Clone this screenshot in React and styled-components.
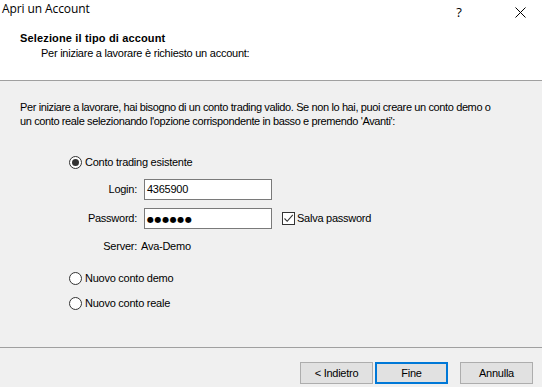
import React from 'react'
import styled, { createGlobalStyle } from 'styled-components'

const Global = createGlobalStyle`
  html, body { margin: 0; padding: 0; background: #f0f0f0; }
  * { box-sizing: border-box; }
`

const Window = styled.div`
  width: 542px;
  height: 387px;
  display: flex;
  flex-direction: column;
  background: #f0f0f0;
  color: #000;
  font-family: "Liberation Sans", Arial, sans-serif;
  font-size: 11px;
  letter-spacing: -0.25px;
  overflow: hidden;
`

const TitleBar = styled.div`
  height: 28px;
  display: flex;
  align-items: flex-start;
  background: #fff;
  padding: 1px 0 0 2px;
`

const Caption = styled.div`
  flex: 1;
  font-family: "Open Sans", "Noto Sans", sans-serif;
  font-size: 12px;
  line-height: 16px;
  letter-spacing: -0.1px;
`

const CaptionButton = styled.div`
  width: ${({ $w }) => $w}px;
  margin-left: ${({ $ml }) => $ml || 0}px;
  height: 22px;
  display: flex;
  align-items: center;
  justify-content: center;
  font-family: "Open Sans", "Noto Sans", sans-serif;
  font-size: 13px;
`

const Header = styled.div`
  height: 53px;
  background: #fff;
  border-bottom: 1px solid #a0a0a0;
  padding: 4px 0 0 20px;
`

const HeaderTitle = styled.div`
  font-weight: bold;
  line-height: 13px;
  letter-spacing: 0.15px;
`

const HeaderSub = styled.div`
  line-height: 13px;
  margin: 2px 0 0 21px;
`

const Content = styled.div`
  height: 266px;
  padding: 19px 20px 0 20px;
  display: flex;
  flex-direction: column;
`

const Intro = styled.p`
  margin: 0;
  line-height: 14px;
  white-space: nowrap;
  letter-spacing: -0.38px;
`

const OptionRow = styled.label`
  display: flex;
  align-items: center;
  gap: 3px;
  height: 16px;
  margin: ${({ $mt }) => $mt}px 0 0 49px;
  line-height: 13px;
`

const RadioCircle = styled.span`
  width: 13px;
  height: 13px;
  border-radius: 50%;
  border: 1px solid #333;
  background: #fff;
  display: flex;
  align-items: center;
  justify-content: center;
  &::after {
    content: '';
    width: 7px;
    height: 7px;
    border-radius: 50%;
    background: ${({ $on }) => ($on ? '#333' : 'transparent')};
  }
`

const Form = styled.div`
  display: grid;
  grid-template-columns: 117px 128px auto;
  column-gap: 7px;
  row-gap: 8px;
  margin-top: 9px;
  align-items: center;
`

const Label = styled.div`
  text-align: right;
  line-height: 13px;
  margin-top: ${({ $mt }) => $mt || 0}px;
`

const TextBox = styled.div`
  height: 21px;
  border: 1px solid #7a7a7a;
  background: #fff;
  padding: 0 2px;
  display: flex;
  align-items: center;
  line-height: 13px;
`

const Dots = styled.span`
  font-family: "DejaVu Sans", sans-serif;
  font-size: 8px;
  letter-spacing: 0.6px;
  margin-top: 1px;
`

const CheckRow = styled.label`
  display: flex;
  align-items: center;
  gap: 2px;
  margin-left: 3px;
  line-height: 13px;
`

const CheckBox = styled.span`
  width: 13px;
  height: 13px;
  border: 1px solid #333;
  background: #fff;
  display: flex;
  align-items: center;
  justify-content: center;
`

const ServerValue = styled.div`
  margin: 3px 0 0 -3px;
  line-height: 13px;
`

const Footer = styled.div`
  flex: 1;
  border-top: 1px solid #a0a0a0;
  display: flex;
  justify-content: flex-end;
  align-items: flex-start;
  padding: 14px 9px 0 0;
`

const Button = styled.button`
  width: 73px;
  height: 22px;
  margin-left: ${({ $ml }) => $ml || 0}px;
  background: #e1e1e1;
  border: ${({ $default }) => ($default ? '2px solid #0078d7' : '1px solid #adadad')};
  font-family: "Liberation Sans", Arial, sans-serif;
  font-size: 11px;
  letter-spacing: -0.25px;
  color: #000;
  padding: 0;
`

const Radio = ({ on, children, mt }) => (
  <OptionRow $mt={mt}>
    <RadioCircle $on={on} />
    {children}
  </OptionRow>
)

export default function App() {
  return (
    <Window>
      <Global />
      <TitleBar>
        <Caption>Apri un Account</Caption>
        <CaptionButton $w={30}>?</CaptionButton>
        <CaptionButton $w={44} $ml={24}>
          <svg width="11" height="11" viewBox="0 0 11 11">
            <path d="M0.5 0.5 L10.5 10.5 M10.5 0.5 L0.5 10.5" stroke="#000" strokeWidth="1" fill="none" />
          </svg>
        </CaptionButton>
      </TitleBar>
      <Header>
        <HeaderTitle>Selezione il tipo di account</HeaderTitle>
        <HeaderSub>Per iniziare a lavorare è richiesto un account:</HeaderSub>
      </Header>
      <Content>
        <Intro>
          Per iniziare a lavorare, hai bisogno di un conto trading valido. Se non lo hai, puoi creare un conto demo o
          <br />
          un conto reale selezionando l'opzione corrispondente in basso e premendo 'Avanti':
        </Intro>
        <Radio on mt={26}>Conto trading esistente</Radio>
        <Form>
          <Label>Login:</Label>
          <TextBox>4365900</TextBox>
          <div />
          <Label>Password:</Label>
          <TextBox><Dots>●●●●●●</Dots></TextBox>
          <CheckRow>
            <CheckBox>
              <svg width="11" height="11" viewBox="0 0 11 11">
                <path d="M1.5 5.5 L4.2 8.3 L9.8 1.8" stroke="#333" strokeWidth="1.1" fill="none" />
              </svg>
            </CheckBox>
            Salva password
          </CheckRow>
          <Label $mt={3}>Server:</Label>
          <ServerValue>Ava-Demo</ServerValue>
        </Form>
        <Radio mt={17}>Nuovo conto demo</Radio>
        <Radio mt={9}>Nuovo conto reale</Radio>
      </Content>
      <Footer>
        <Button>&lt; Indietro</Button>
        <Button $default $ml={2}>Fine</Button>
        <Button $ml={12}>Annulla</Button>
      </Footer>
    </Window>
  )
}
